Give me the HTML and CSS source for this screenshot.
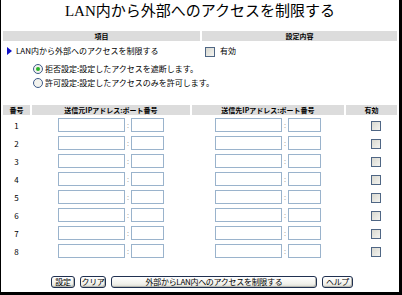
FILE: index.html
```html
<!DOCTYPE html>
<html lang="ja">
<head>
<meta charset="utf-8">
<link rel="stylesheet" href="styles.css">
</head>
<body>
<div class="frame">
  <h1 class="title">LAN内から外部へのアクセスを制限する</h1>
  <table class="settings">
    <tr class="hdr"><th class="c-item">項目</th><th>設定内容</th></tr>
    <tr class="item-row">
      <td class="item"><span class="tri"></span>LAN内から外部へのアクセスを制限する</td>
      <td class="val"><span class="cb"></span>有効</td>
    </tr>
    <tr class="radio-row"><td colspan="2"><span class="rd on"></span>拒否設定:設定したアクセスを遮断します。</td></tr>
    <tr class="radio-row"><td colspan="2"><span class="rd"></span>許可設定:設定したアクセスのみを許可します。</td></tr>
  </table>
  <table class="rules">
    <tr class="hdr">
      <th class="c-no">番号</th>
      <th class="c-src">送信元IPアドレス:ポート番号</th>
      <th class="c-dst">送信先IPアドレス:ポート番号</th>
      <th class="c-en">有効</th>
    </tr>
    <tr><td class="no">1</td><td class="addr"><span class="ip"></span><span class="colon">:</span><span class="port"></span></td><td class="addr"><span class="ip"></span><span class="colon">:</span><span class="port"></span></td><td class="en"><span class="cb"></span></td></tr>
    <tr><td class="no">2</td><td class="addr"><span class="ip"></span><span class="colon">:</span><span class="port"></span></td><td class="addr"><span class="ip"></span><span class="colon">:</span><span class="port"></span></td><td class="en"><span class="cb"></span></td></tr>
    <tr><td class="no">3</td><td class="addr"><span class="ip"></span><span class="colon">:</span><span class="port"></span></td><td class="addr"><span class="ip"></span><span class="colon">:</span><span class="port"></span></td><td class="en"><span class="cb"></span></td></tr>
    <tr><td class="no">4</td><td class="addr"><span class="ip"></span><span class="colon">:</span><span class="port"></span></td><td class="addr"><span class="ip"></span><span class="colon">:</span><span class="port"></span></td><td class="en"><span class="cb"></span></td></tr>
    <tr><td class="no">5</td><td class="addr"><span class="ip"></span><span class="colon">:</span><span class="port"></span></td><td class="addr"><span class="ip"></span><span class="colon">:</span><span class="port"></span></td><td class="en"><span class="cb"></span></td></tr>
    <tr><td class="no">6</td><td class="addr"><span class="ip"></span><span class="colon">:</span><span class="port"></span></td><td class="addr"><span class="ip"></span><span class="colon">:</span><span class="port"></span></td><td class="en"><span class="cb"></span></td></tr>
    <tr><td class="no">7</td><td class="addr"><span class="ip"></span><span class="colon">:</span><span class="port"></span></td><td class="addr"><span class="ip"></span><span class="colon">:</span><span class="port"></span></td><td class="en"><span class="cb"></span></td></tr>
    <tr><td class="no">8</td><td class="addr"><span class="ip"></span><span class="colon">:</span><span class="port"></span></td><td class="addr"><span class="ip"></span><span class="colon">:</span><span class="port"></span></td><td class="en"><span class="cb"></span></td></tr>
  </table>
  <div class="buttons">
    <span class="btn b-set">設定</span>
    <span class="btn b-clr">クリア</span>
    <span class="btn b-ext">外部からLAN内へのアクセスを制限する</span>
    <span class="btn b-help">ヘルプ</span>
  </div>
</div>
</body>
</html>
```

FILE: styles.css
```css
html, body {
  margin: 0;
  padding: 0;
  background: #ffffff;
}
.frame {
  box-sizing: border-box;
  width: 402px;
  height: 295px;
  border-left: 1px solid #000;
  border-right: 3px solid #000;
  border-bottom: 3px solid #000;
  background: #fff;
  font-family: "Noto Sans CJK JP", "Noto Sans", sans-serif;
  font-size: 8px;
  color: #000;
  overflow: hidden;
}
.title {
  margin: 0;
  padding-top: 1px;
  height: 29px;
  box-sizing: border-box;
  text-align: center;
  font-family: "Liberation Serif", "Noto Sans CJK JP", serif;
  font-weight: normal;
  font-size: 15px;
  line-height: 20px;
}
table {
  border-collapse: separate;
  border-spacing: 2px;
  width: 398px;
  table-layout: fixed;
}
td, th {
  padding: 0;
}
.hdr th {
  background: #dcdcdc;
  height: 10px;
  line-height: 10px;
  font-size: 7px;
  font-weight: bold;
  text-align: center;
}
.c-item { width: 197px; }
.item-row td {
  height: 16px;
  line-height: 12px;
  padding-top: 2px;
  vertical-align: top;
}
.item {
  padding-left: 4px;
  white-space: nowrap;
}
.tri {
  display: inline-block;
  width: 0;
  height: 0;
  border-top: 4px solid transparent;
  border-bottom: 4px solid transparent;
  border-left: 5px solid #1010c8;
  margin-right: 4px;
  vertical-align: -1px;
}
.val {
  padding-left: 3px;
}
.cb {
  display: inline-block;
  box-sizing: border-box;
  width: 10px;
  height: 10px;
  border: 1px solid #4f6684;
  background: linear-gradient(135deg, #d8d8d0 0%, #f4f4f0 100%);
  vertical-align: middle;
}
.val .cb {
  margin-right: 5px;
}
.radio-row td {
  height: 12px;
  line-height: 12px;
  padding-left: 30px;
  white-space: nowrap;
}
.rd {
  display: inline-block;
  box-sizing: border-box;
  width: 10px;
  height: 10px;
  border: 1px solid #3d5a8a;
  border-radius: 50%;
  background: #f3f3ee;
  margin-right: 2px;
  vertical-align: -2px;
  position: relative;
}
.rd.on::after {
  content: "";
  position: absolute;
  left: 2px;
  top: 2px;
  width: 4px;
  height: 4px;
  border-radius: 50%;
  background: #28b428;
}
.rules {
  margin-top: 12px;
}
.c-no { width: 27px; }
.c-src { width: 158px; }
.c-dst { width: 152px; }
.rules td {
  height: 16px;
  text-align: center;
  vertical-align: middle;
}
.no {
  font-size: 8px;
}
.addr {
  white-space: nowrap;
  font-size: 0;
}
.ip, .port {
  display: inline-block;
  box-sizing: border-box;
  height: 14px;
  border: 1px solid #9ab3cc;
  background: #fff;
  vertical-align: middle;
}
.ip { width: 67px; }
.port { width: 33px; }
.colon {
  display: inline-block;
  width: 6px;
  font-size: 7px;
  color: #999;
  text-align: center;
  vertical-align: middle;
}
.rules td.en {
  padding-left: 8px;
}
.buttons {
  display: flex;
  justify-content: center;
  gap: 5px;
  margin-top: 15px;
  padding-left: 4px;
}
.btn {
  box-sizing: border-box;
  height: 12px;
  line-height: 10px;
  padding: 0;
  border: 1px solid #203050;
  border-radius: 3px;
  background: linear-gradient(#ffffff, #f0f0ea 70%, #d8d8d0);
  box-shadow: inset -1px -1px 0 #b8b8b0;
  font-size: 8px;
  text-align: center;
  white-space: nowrap;
  letter-spacing: -0.3px;
}
.b-set { width: 24px; }
.b-clr { width: 26px; }
.b-ext { width: 206px; }
.b-help { width: 31px; }
```
